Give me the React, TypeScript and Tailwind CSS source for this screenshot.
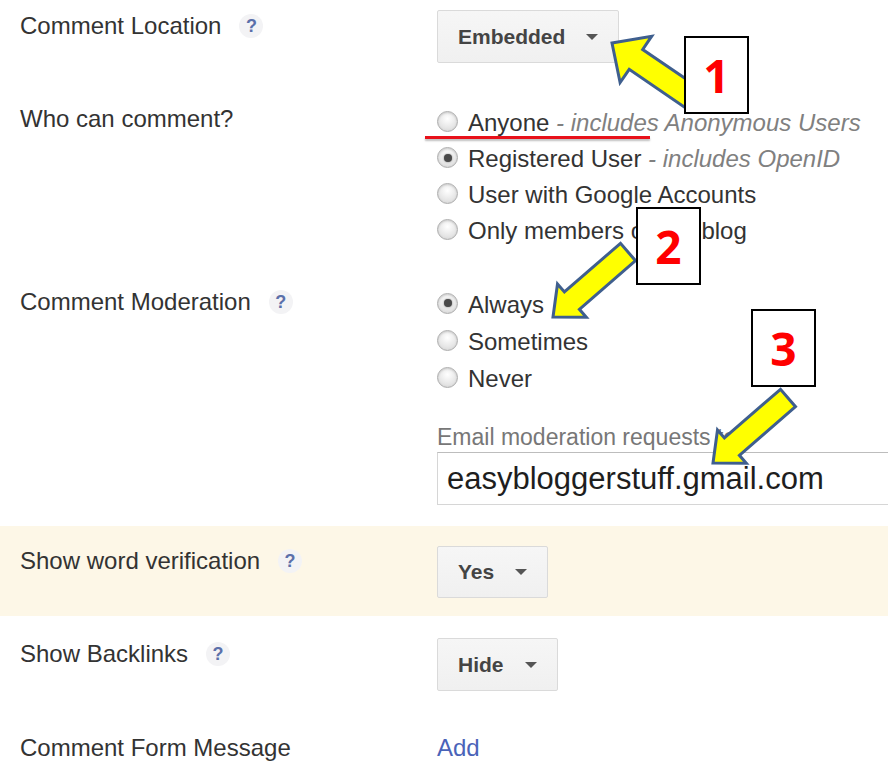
import type { ReactNode } from 'react'

type Pt = [number, number]

// block arrow polygon from tail to tip
function arrowPoints(tail: Pt, tip: Pt, head: number, hw: number, sw: number) {
  const dx = tip[0] - tail[0]
  const dy = tip[1] - tail[1]
  const len = Math.hypot(dx, dy)
  const ux = dx / len, uy = dy / len
  const px = -uy, py = ux
  const bx = tip[0] - ux * head, by = tip[1] - uy * head
  const pts: Pt[] = [
    [tail[0] + px * sw, tail[1] + py * sw],
    [bx + px * sw, by + py * sw],
    [bx + px * hw, by + py * hw],
    tip,
    [bx - px * hw, by - py * hw],
    [bx - px * sw, by - py * sw],
    [tail[0] - px * sw, tail[1] - py * sw],
  ]
  return pts.map(p => `${p[0].toFixed(1)},${p[1].toFixed(1)}`).join(' ')
}

const ARROWS = [
  { id: 'a1', tail: [691, 97] as Pt, tip: [612, 43] as Pt, head: 29, hw: 28, sw: 12 },
  { id: 'a2', tail: [628, 252] as Pt, tip: [553, 317] as Pt, head: 25, hw: 22, sw: 11.5 },
  { id: 'a3', tail: [788, 398] as Pt, tip: [713, 463] as Pt, head: 25, hw: 22, sw: 11.5 },
]

function Help() {
  return (
    <span className="ml-[18px] w-[24px] h-[24px] rounded-full bg-[#f3f3f5] flex items-center justify-center text-[18px] font-bold text-[#5b70aa] leading-none">?</span>
  )
}

function Label({ children, help, className = '' }: { children: ReactNode; help?: boolean; className?: string }) {
  return (
    <div className={`w-[437px] shrink-0 pl-[20px] flex items-center h-[28px] leading-[28px] ${className}`}>
      <span>{children}</span>
      {help && <Help />}
    </div>
  )
}

function Dropdown({ children, h = 'h-[53px]' }: { children: ReactNode; h?: string }) {
  return (
    <div className={`${h} shrink-0 flex items-center gap-[21px] pl-[20px] pr-[20px] rounded-[2px] border border-[#dadada] bg-[linear-gradient(#f6f6f6,#f0f0f0)] text-[21px] font-bold text-[#444]`}>
      <span>{children}</span>
      <span className="w-0 h-0 border-l-[6.5px] border-r-[6.5px] border-t-[6px] border-l-transparent border-r-transparent border-t-[#555]" />
    </div>
  )
}

function Radio({ checked, children, h }: { checked?: boolean; children: ReactNode; h: string }) {
  return (
    <div className={`flex items-center ${h}`}>
      <span className="w-[21px] h-[21px] -mt-[3px] mr-[10px] rounded-full border border-[#adadad] bg-[radial-gradient(circle_at_50%_35%,#ffffff_0%,#e6e6e6_60%,#cfcfcf_100%)] shadow-[inset_0_1px_2px_rgba(0,0,0,0.15)] flex items-center justify-center">
        {checked && <span className="w-[8px] h-[8px] rounded-full bg-[#4a4a4a] shadow-[0_0_2px_rgba(0,0,0,0.5)]" />}
      </span>
      <span className="whitespace-nowrap">{children}</span>
    </div>
  )
}

function Note({ children }: { children: ReactNode }) {
  return <span className="italic text-[#808080]"> - {children}</span>
}

function NumBox({ n, className }: { n: string; className: string }) {
  return (
    <div className={`absolute w-[65px] h-[78px] border-2 border-black bg-white flex items-center justify-center font-['Open_Sans','Liberation_Sans',sans-serif] font-bold text-[46px] leading-none text-[#ff0000] ${className}`}>
      {n}
    </div>
  )
}

export default function App() {
  return (
    <div className="relative w-[888px] h-[774px] overflow-hidden bg-white font-['Liberation_Sans',Arial,sans-serif] text-[24px] text-[#333]">
      <div className="flex pt-[10px] h-[105px]">
        <Label help className="mt-[2px]">Comment Location</Label>
        <Dropdown>Embedded</Dropdown>
      </div>

      <div className="flex h-[181px]">
        <Label>Who can comment?</Label>
        <div className="leading-[36px]">
          <Radio h="h-[36px]">Anyone<Note>includes Anonymous Users</Note></Radio>
          <Radio h="h-[36px]" checked>Registered User<Note>includes OpenID</Note></Radio>
          <Radio h="h-[36px]">User with Google Accounts</Radio>
          <Radio h="h-[36px]">Only members of this blog</Radio>
        </div>
      </div>

      <div className="flex">
        <Label help className="mt-[2px]">Comment Moderation</Label>
        <div className="flex-1 leading-[37px]">
          <Radio h="h-[37px]" checked>Always</Radio>
          <Radio h="h-[37px]">Sometimes</Radio>
          <Radio h="h-[37px]">Never</Radio>
          <div className="mt-[26px] h-[28px] leading-[28px] text-[23px] text-[#777] whitespace-nowrap">Email moderation requests to</div>
          <div className="mt-[1px] w-[470px] h-[53px] flex items-center pl-[9px] border border-[#d6d6d6] border-t-[#bdbdbd] text-[31px] text-[#1e1e1e] whitespace-nowrap">
            easybloggerstuff.gmail.com
          </div>
        </div>
      </div>

      <div className="mt-[21px] h-[90px] pt-[20px] flex bg-[#fdf7e7]">
        <Label help className="mt-[1px]">Show word verification</Label>
        <Dropdown h="h-[52px]">Yes</Dropdown>
      </div>

      <div className="flex pt-[22px]">
        <Label help className="mt-[2px]">Show Backlinks</Label>
        <Dropdown>Hide</Dropdown>
      </div>

      <div className="flex mt-[43px]">
        <Label>Comment Form Message</Label>
        <span className="h-[28px] leading-[28px] text-[#4a63b8]">Add</span>
      </div>

      {/* annotations */}
      <div className="absolute left-[425px] top-[136px] w-[225px] h-[3px] bg-[#e8111a] shadow-[0_2px_2px_rgba(0,0,0,0.25)]" />
      <svg className="absolute inset-0 pointer-events-none" width="888" height="774" viewBox="0 0 888 774">
        {ARROWS.map(a => (
          <polygon key={a.id} points={arrowPoints(a.tail, a.tip, a.head, a.hw, a.sw)} fill="#ffff00" stroke="#3f5f8e" strokeWidth="3" strokeLinejoin="miter" />
        ))}
      </svg>
      <NumBox n="1" className="left-[684px] top-[36px]" />
      <NumBox n="2" className="left-[636px] top-[207px]" />
      <NumBox n="3" className="left-[751px] top-[309px]" />
    </div>
  )
}
